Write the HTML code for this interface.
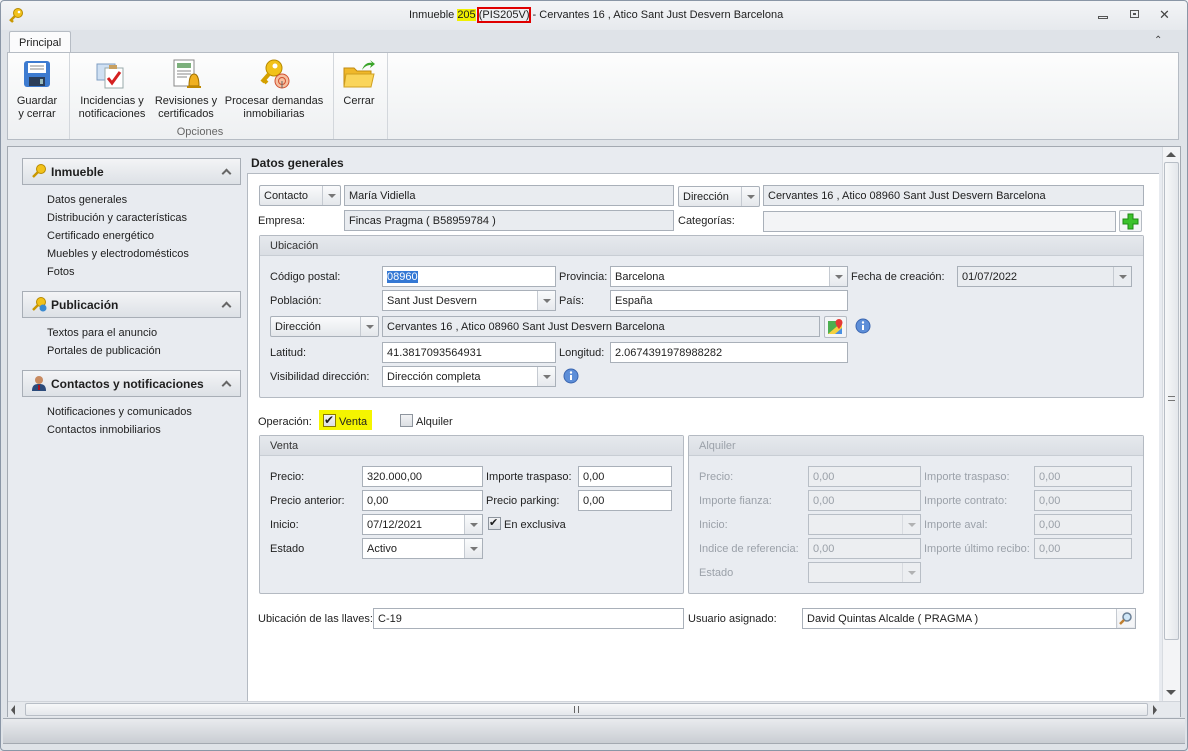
<!DOCTYPE html>
<html><head><meta charset="utf-8"><style>
*{box-sizing:border-box;margin:0;padding:0}
body{width:1188px;height:751px;position:relative;overflow:hidden;background:#dfe3e8;font-family:"Liberation Sans",sans-serif;font-size:11px;color:#1e1e1e}
.a{position:absolute}
.t{position:absolute;white-space:nowrap;line-height:14px}
.in{position:absolute;height:21px;border:1px solid #a9b0b9;background:#fff;padding:3px 4px;line-height:14px;white-space:nowrap;overflow:hidden}
.g{background:#e9ecf0}
.dis{background:#eceef1;border-color:#b8bec6;color:#9aa0a8}
.dd{position:absolute;top:0;right:0;width:18px;height:19px;border-left:1px solid #c5cad1;background:linear-gradient(#fafbfc,#e6e9ed)}
.dd:after{content:"";position:absolute;left:5px;top:8px;border-left:4px solid transparent;border-right:4px solid transparent;border-top:4px solid #777}
.cb{position:absolute;height:21px;border:1px solid #a9b0b9;border-radius:2px;background:linear-gradient(#fafbfc,#e4e7eb);padding:3px 4px;line-height:14px}
.grp{position:absolute;border:1px solid #b4bac2;background:#e9ecf1;border-radius:2px}
.gh{height:20px;background:linear-gradient(#e6e9ed,#dadee4);border-bottom:1px solid #c8cdd4;padding:3px 10px;line-height:14px;color:#333}
.nh{position:absolute;left:22px;width:219px;height:27px;border:1px solid #a8aeb6;background:linear-gradient(#f3f4f6,#dde1e6);font-weight:bold;font-size:12px;padding:6px 0 0 28px}
.nh:after{content:"";position:absolute;right:10px;top:11px;width:5px;height:5px;border-left:2px solid #666;border-top:2px solid #666;transform:rotate(45deg)}
.ni{position:absolute;left:47px;line-height:14px}
.chk{position:absolute;width:13px;height:13px;border:1px solid #8e959e;background:linear-gradient(#f2f3f5,#dcdfe3)}
.lbl{color:#222}
.dl{color:#9ba1a9}
.rl{position:absolute;text-align:center;line-height:13px;color:#222;white-space:nowrap}
</style></head><body>
<div class="a" style="left:0;top:0;width:1188px;height:30px;background:linear-gradient(#f4f5f7,#e6e9ed)"></div>
<svg class="a" style="left:8px;top:7px" width="16" height="16"><circle cx="10" cy="6" r="4.5" fill="#f2c21a" stroke="#b78a00"/><path d="M7 9 L2 14 M3 13 L5 15" stroke="#c99700" stroke-width="2.5"/><circle cx="11" cy="5" r="1.3" fill="#fff"/></svg>
<div class="t" style="left:409px;top:8px">Inmueble <span style="background:#f0f000">205</span> <span style="outline:2px solid #e00000">(PIS205V)</span> - Cervantes 16 , Atico Sant Just Desvern Barcelona</div>
<div class="a" style="left:1098px;top:16px;width:10px;height:3px;border:1px solid #555"></div>
<div class="a" style="left:1130px;top:10px;width:9px;height:8px;border:1px solid #555"><div style="margin:2px;width:3px;height:2px;border:1px solid #555"></div></div>
<div class="t" style="left:1159px;top:8px;color:#444;font-size:13px">✕</div>
<div class="t" style="left:1154px;top:34px;color:#444;font-size:10px">⌃</div>
<div class="a" style="left:9px;top:31px;width:62px;height:22px;border:1px solid #b6bcc4;border-bottom:none;background:#fbfbfc;border-radius:2px 2px 0 0"></div>
<div class="t" style="left:19px;top:36px">Principal</div>
<div class="a" style="left:7px;top:52px;width:1172px;height:88px;border:1px solid #b6bcc4;background:linear-gradient(#fdfdfd,#eef0f2)"></div>
<div class="a" style="left:69px;top:53px;width:1px;height:86px;background:#d3d7dc"></div>
<div class="a" style="left:333px;top:53px;width:1px;height:86px;background:#d3d7dc"></div>
<div class="a" style="left:387px;top:53px;width:1px;height:86px;background:#d3d7dc"></div>
<svg class="a" style="left:23px;top:60px" width="28" height="28"><rect x="1" y="1" width="26" height="26" rx="3" fill="#3d7bd0"/><rect x="5" y="3" width="18" height="10" fill="#fff"/><path d="M7 6h14M7 9h14" stroke="#888"/><rect x="6" y="17" width="16" height="9" fill="#2a3d5a"/><rect x="17" y="19" width="3" height="5" fill="#9bb"/></svg>
<svg class="a" style="left:95px;top:58px" width="34" height="32"><rect x="2" y="6" width="18" height="16" fill="#cfe0f3" stroke="#7f9ec3"/><rect x="10" y="10" width="18" height="20" fill="#fff" stroke="#9aa"/><path d="M13 20l4 5 8-11" stroke="#d42020" stroke-width="3" fill="none"/><rect x="14" y="7" width="8" height="4" fill="#c8a060"/></svg>
<svg class="a" style="left:171px;top:58px" width="32" height="32"><rect x="3" y="2" width="20" height="26" fill="#fff" stroke="#888"/><rect x="6" y="5" width="14" height="5" fill="#7cb07c"/><path d="M6 13h14M6 16h14M6 19h10" stroke="#888"/><path d="M18 28c0-8 2-12 5-12s5 4 5 12z" fill="#f0b020" stroke="#a07000"/><rect x="16" y="28" width="14" height="2" fill="#c08800"/></svg>
<svg class="a" style="left:259px;top:58px" width="32" height="32"><circle cx="15" cy="10" r="8" fill="#f2c21a" stroke="#b78a00"/><circle cx="16" cy="8" r="2.5" fill="#fff"/><path d="M10 16 L3 24 M5 22 L8 25" stroke="#d4a000" stroke-width="4"/><circle cx="23" cy="23" r="7" fill="#f6c0a0" stroke="#d05030"/><circle cx="23" cy="23" r="3.5" fill="none" stroke="#d05030"/><path d="M23 23v7" stroke="#666"/></svg>
<svg class="a" style="left:342px;top:58px" width="34" height="32"><path d="M2 10h10l3 3h14v16H2z" fill="#f0b82a" stroke="#c08a10"/><path d="M4 16h28l-3 13H2z" fill="#fad55a" stroke="#d0a020"/><path d="M20 12c2-6 6-8 10-7l-2-3 5 4-5 4 1-3c-3 0-6 1-9 5z" fill="#3aa52a"/></svg>
<div class="rl" style="left:10px;top:95px;width:54px">Guardar<br>y cerrar</div>
<div class="rl" style="left:72px;top:95px;width:80px">Incidencias y<br>notificaciones</div>
<div class="rl" style="left:148px;top:95px;width:76px">Revisiones y<br>certificados</div>
<div class="rl" style="left:218px;top:95px;width:112px">Procesar demandas<br>inmobiliarias</div>
<div class="rl" style="left:336px;top:95px;width:46px">Cerrar</div>
<div class="rl" style="left:160px;top:126px;width:80px;color:#666">Opciones</div>
<div class="a" style="left:7px;top:146px;width:1174px;height:571px;border:1px solid #a3a9b1;background:#e8ebf0"></div>
<div class="a" style="left:247px;top:173px;width:912px;height:528px;background:#fff;border-left:1px solid #b4bac2;border-top:1px solid #b4bac2"></div>
<div class="nh" style="top:158px">Inmueble</div>
<svg class="a" style="left:31px;top:163px" width="16" height="16"><circle cx="10" cy="6" r="4.5" fill="#f2c21a" stroke="#b78a00"/><path d="M7 9 L2 14" stroke="#c99700" stroke-width="2.5"/></svg>
<div class="ni" style="top:193px">Datos generales</div>
<div class="ni" style="top:211px">Distribución y características</div>
<div class="ni" style="top:229px">Certificado energético</div>
<div class="ni" style="top:247px">Muebles y electrodomésticos</div>
<div class="ni" style="top:265px">Fotos</div>
<div class="nh" style="top:291px">Publicación</div>
<svg class="a" style="left:31px;top:296px" width="16" height="16"><circle cx="10" cy="6" r="4.5" fill="#f2c21a" stroke="#b78a00"/><path d="M7 9 L2 14" stroke="#c99700" stroke-width="2.5"/><circle cx="12" cy="12" r="3.5" fill="#3a8ad0"/></svg>
<div class="ni" style="top:326px">Textos para el anuncio</div>
<div class="ni" style="top:344px">Portales de publicación</div>
<div class="nh" style="top:370px">Contactos y notificaciones</div>
<svg class="a" style="left:31px;top:375px" width="16" height="16"><circle cx="8" cy="5" r="4" fill="#c88a60"/><path d="M1 16c0-6 3-7 7-7s7 1 7 7z" fill="#2b4a7a"/><path d="M8 10v5" stroke="#c00" stroke-width="1.5"/></svg>
<div class="ni" style="top:405px">Notificaciones y comunicados</div>
<div class="ni" style="top:423px">Contactos inmobiliarios</div>
<div class="t" style="left:251px;top:156px;font-weight:bold;font-size:12px">Datos generales</div>
<div class="cb" style="left:259px;top:185px;width:82px">Contacto<div class="dd" style="background:none"></div></div>
<div class="in g" style="left:344px;top:185px;width:330px">María Vidiella</div>
<div class="cb" style="left:678px;top:186px;width:82px">Dirección<div class="dd" style="background:none"></div></div>
<div class="in g" style="left:763px;top:185px;width:381px">Cervantes 16 , Atico 08960 Sant Just Desvern Barcelona</div>
<div class="t lbl" style="left:258px;top:214px">Empresa:</div>
<div class="in g" style="left:344px;top:210px;width:330px">Fincas Pragma ( B58959784 )</div>
<div class="t lbl" style="left:678px;top:214px">Categorías:</div>
<div class="in" style="left:763px;top:211px;width:353px;background:#f3f4f6"></div>
<div class="a" style="left:1119px;top:210px;width:23px;height:22px;border:1px solid #b5bbc3;border-radius:2px;background:#f4f5f7"></div>
<svg class="a" style="left:1122px;top:213px" width="17" height="17"><path d="M6 1h5v5h5v5h-5v5H6v-5H1V6h5z" fill="#3cc22c" stroke="#1e8a14"/></svg>
<div class="grp" style="left:259px;top:235px;width:885px;height:163px"><div class="gh">Ubicación</div></div>
<div class="t lbl" style="left:270px;top:270px">Código postal:</div>
<div class="in" style="left:382px;top:266px;width:174px"><span style="background:#3478d4;color:#fff">08960</span></div>
<div class="t lbl" style="left:559px;top:270px">Provincia:</div>
<div class="in" style="left:610px;top:266px;width:238px">Barcelona<div class="dd"></div></div>
<div class="t lbl" style="left:851px;top:270px">Fecha de creación:</div>
<div class="in g" style="left:957px;top:266px;width:175px">01/07/2022<div class="dd" style="background:none"></div></div>
<div class="t lbl" style="left:270px;top:294px">Población:</div>
<div class="in" style="left:382px;top:290px;width:174px">Sant Just Desvern<div class="dd"></div></div>
<div class="t lbl" style="left:559px;top:294px">País:</div>
<div class="in" style="left:610px;top:290px;width:238px">España</div>
<div class="cb" style="left:270px;top:316px;width:109px">Dirección<div class="dd" style="background:none"></div></div>
<div class="in g" style="left:382px;top:316px;width:438px">Cervantes 16 , Atico 08960 Sant Just Desvern Barcelona</div>
<div class="a" style="left:824px;top:316px;width:23px;height:22px;border:1px solid #b5bbc3;border-radius:2px;background:#f4f5f7"></div>
<svg class="a" style="left:827px;top:318px" width="17" height="17"><rect x="1" y="3" width="14" height="13" fill="#4caf50"/><path d="M1 16L15 4v12z" fill="#f4d03f"/><path d="M8 16L15 10v6z" fill="#4a90e2"/><path d="M12 1a3.5 3.5 0 0 1 3.5 3.5C15.5 7 12 11 12 11S8.5 7 8.5 4.5A3.5 3.5 0 0 1 12 1z" fill="#e53935"/></svg>
<svg class="a" style="left:855px;top:318px" width="16" height="16"><circle cx="8" cy="8" r="7" fill="#5d8ed8" stroke="#3b66b0"/><rect x="7" y="7" width="2" height="5" fill="#fff"/><circle cx="8" cy="4.5" r="1.2" fill="#fff"/></svg>
<div class="t lbl" style="left:270px;top:346px">Latitud:</div>
<div class="in" style="left:382px;top:342px;width:174px">41.3817093564931</div>
<div class="t lbl" style="left:559px;top:346px">Longitud:</div>
<div class="in" style="left:610px;top:342px;width:238px">2.0674391978988282</div>
<div class="t lbl" style="left:270px;top:370px">Visibilidad dirección:</div>
<div class="in" style="left:382px;top:366px;width:174px">Dirección completa<div class="dd"></div></div>
<svg class="a" style="left:563px;top:368px" width="16" height="16"><circle cx="8" cy="8" r="7" fill="#5d8ed8" stroke="#3b66b0"/><rect x="7" y="7" width="2" height="5" fill="#fff"/><circle cx="8" cy="4.5" r="1.2" fill="#fff"/></svg>
<div class="t lbl" style="left:258px;top:415px">Operación:</div>
<div class="a" style="left:319px;top:410px;width:53px;height:20px;background:#f5f500"></div>
<div class="chk" style="left:323px;top:414px;border-color:#8a7a00"></div><div class="t" style="left:324px;top:413px;font-size:12px">✔</div>
<div class="t" style="left:339px;top:415px">Venta</div>
<div class="chk" style="left:400px;top:414px"></div>
<div class="t" style="left:416px;top:415px">Alquiler</div>
<div class="grp" style="left:259px;top:435px;width:425px;height:159px"><div class="gh">Venta</div></div>
<div class="t lbl" style="left:270px;top:470px">Precio:</div>
<div class="in" style="left:362px;top:466px;width:121px">320.000,00</div>
<div class="t lbl" style="left:486px;top:470px">Importe traspaso:</div>
<div class="in" style="left:578px;top:466px;width:94px">0,00</div>
<div class="t lbl" style="left:270px;top:494px">Precio anterior:</div>
<div class="in" style="left:362px;top:490px;width:121px">0,00</div>
<div class="t lbl" style="left:486px;top:494px">Precio parking:</div>
<div class="in" style="left:578px;top:490px;width:94px">0,00</div>
<div class="t lbl" style="left:270px;top:518px">Inicio:</div>
<div class="in" style="left:362px;top:514px;width:121px">07/12/2021<div class="dd"></div></div>
<div class="chk" style="left:488px;top:517px"></div><div class="t" style="left:489px;top:516px">✔</div>
<div class="t lbl" style="left:504px;top:518px">En exclusiva</div>
<div class="t lbl" style="left:270px;top:542px">Estado</div>
<div class="in" style="left:362px;top:538px;width:121px">Activo<div class="dd"></div></div>
<div class="grp" style="left:688px;top:435px;width:456px;height:159px"><div class="gh" style="color:#9ba1a9">Alquiler</div></div>
<div class="t dl" style="left:699px;top:470px">Precio:</div>
<div class="in dis" style="left:808px;top:466px;width:113px">0,00</div>
<div class="t dl" style="left:924px;top:470px">Importe traspaso:</div>
<div class="in dis" style="left:1034px;top:466px;width:98px">0,00</div>
<div class="t dl" style="left:699px;top:494px">Importe fianza:</div>
<div class="in dis" style="left:808px;top:490px;width:113px">0,00</div>
<div class="t dl" style="left:924px;top:494px">Importe contrato:</div>
<div class="in dis" style="left:1034px;top:490px;width:98px">0,00</div>
<div class="t dl" style="left:699px;top:518px">Inicio:</div>
<div class="in dis" style="left:808px;top:514px;width:113px"><div class="dd" style="background:none;opacity:.5"></div></div>
<div class="t dl" style="left:924px;top:518px">Importe aval:</div>
<div class="in dis" style="left:1034px;top:514px;width:98px">0,00</div>
<div class="t dl" style="left:699px;top:542px">Indice de referencia:</div>
<div class="in dis" style="left:808px;top:538px;width:113px">0,00</div>
<div class="t dl" style="left:924px;top:542px">Importe último recibo:</div>
<div class="in dis" style="left:1034px;top:538px;width:98px">0,00</div>
<div class="t dl" style="left:699px;top:566px">Estado</div>
<div class="in dis" style="left:808px;top:562px;width:113px"><div class="dd" style="background:none;opacity:.5"></div></div>
<div class="t lbl" style="left:258px;top:612px">Ubicación de las llaves:</div>
<div class="in" style="left:373px;top:608px;width:311px">C-19</div>
<div class="t lbl" style="left:688px;top:612px">Usuario asignado:</div>
<div class="in" style="left:802px;top:608px;width:334px">David Quintas Alcalde ( PRAGMA )<div class="dd" style="width:19px"></div></div>
<svg class="a" style="left:1118px;top:611px" width="16" height="16"><rect x="0" y="0" width="16" height="16" fill="#f4f5f7"/><circle cx="9" cy="6" r="4" fill="#cfe6f7" stroke="#6a7f95" stroke-width="1.5"/><path d="M6 9L2 13" stroke="#c08030" stroke-width="2.5"/></svg>
<div class="a" style="left:1162px;top:147px;width:18px;height:555px;background:#f3f4f6;border-left:1px solid #d8dce1"></div>
<div class="a" style="left:1166px;top:152px;border-left:5px solid transparent;border-right:5px solid transparent;border-bottom:5px solid #555"></div>
<div class="a" style="left:1164px;top:162px;width:15px;height:478px;border:1px solid #b8bec6;border-radius:2px;background:linear-gradient(90deg,#f7f8f9,#e4e7eb)"></div>
<div class="a" style="left:1168px;top:396px;width:7px;height:5px;border-top:1px solid #777;border-bottom:1px solid #777"></div>
<div class="a" style="left:1166px;top:690px;border-left:5px solid transparent;border-right:5px solid transparent;border-top:5px solid #555"></div>
<div class="a" style="left:8px;top:701px;width:1172px;height:16px;background:#e6e9ed;border-top:1px solid #d0d4da"></div>
<div class="a" style="left:11px;top:705px;border-top:5px solid transparent;border-bottom:5px solid transparent;border-right:4px solid #555"></div>
<div class="a" style="left:1153px;top:705px;border-top:5px solid transparent;border-bottom:5px solid transparent;border-left:4px solid #555"></div>
<div class="a" style="left:25px;top:703px;width:1123px;height:13px;border:1px solid #b8bec6;border-radius:2px;background:linear-gradient(#f7f8f9,#e4e7eb)"></div>
<div class="a" style="left:574px;top:706px;width:5px;height:7px;border-left:1px solid #666;border-right:1px solid #666"></div>
<div class="a" style="left:3px;top:718px;width:1182px;height:26px;background:linear-gradient(#e9ebee,#c9cdd3);border-top:1px solid #a3a9b1;border-bottom:1px solid #a3a9b1"></div>
<div class="a" style="left:0;top:744px;width:1188px;height:7px;background:#dfe3e8"></div>
<div class="a" style="left:0;top:0;width:1188px;height:751px;border:1px solid #8a96a6;border-radius:4px"></div>
</body></html>
